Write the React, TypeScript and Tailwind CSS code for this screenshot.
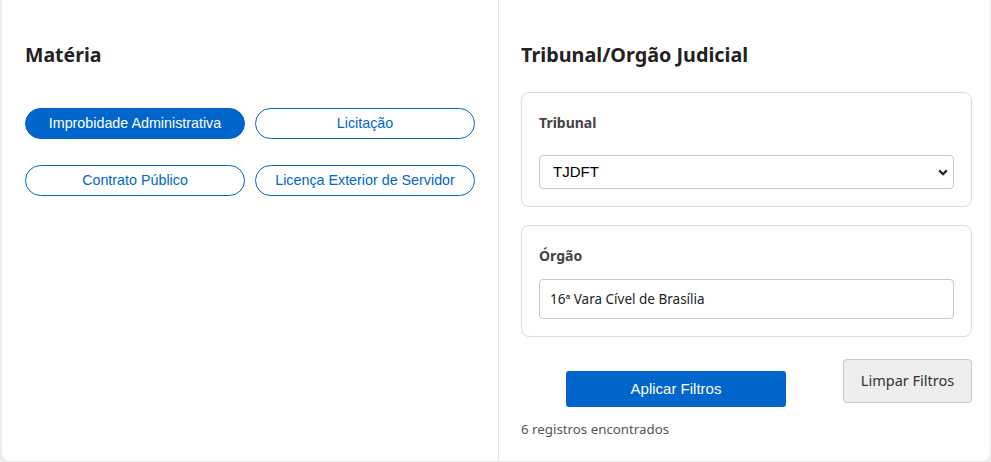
import React, { useState } from 'react';

const MATERIAS = [
  'Improbidade Administrativa',
  'Licitação',
  'Contrato Público',
  'Licença Exterior de Servidor',
];

const Chevron: React.FC = () => (
  <svg width="10" height="7" viewBox="0 0 10 7" className="pointer-events-none absolute right-[6px] top-[14px]">
    <path d="M1.2 1.4 5 5.2 8.8 1.4" fill="none" stroke="#222" strokeWidth="2.2" />
  </svg>
);

const App: React.FC = () => {
  const [materia, setMateria] = useState('Improbidade Administrativa');
  const [tribunal, setTribunal] = useState('TJDFT');
  const [orgao, setOrgao] = useState('16ª Vara Cível de Brasília');

  return (
    <div className="h-[462px] w-full overflow-hidden bg-[#ececec] pl-[2px] pr-px font-['Noto_Sans',sans-serif] text-[#333]">
      <div className="flex h-[461px] rounded-b-lg bg-white">
        {/* Matéria */}
        <section className="w-[497px] shrink-0 border-r border-[#e3e3e3] pl-[23px] pr-[22px] pt-[42px]">
          <h2 className="text-[19.5px] leading-[26px] font-bold text-[#222]">Matéria</h2>
          <div className="mt-[40px] grid w-[450px] grid-cols-2 gap-x-[10px] gap-y-[26px]">
            {MATERIAS.map((m) => (
              <button
                key={m}
                onClick={() => setMateria(m)}
                className={
                  m === materia
                    ? "h-[31px] rounded-full border border-[#0066cc] bg-[#0066cc] font-['Liberation_Sans',Arial,sans-serif] text-[14.3px] text-white"
                    : "h-[31px] rounded-full border border-[#0066cc] bg-white font-['Liberation_Sans',Arial,sans-serif] text-[14.3px] text-[#0066cc]"
                }
              >
                {m}
              </button>
            ))}
          </div>
        </section>

        {/* Tribunal / Órgão */}
        <section className="flex-1 pl-[22px] pr-[18px] pt-[42px]">
          <h2 className="text-[19.8px] leading-[26px] font-bold text-[#222]">Tribunal/Orgão Judicial</h2>

          <div className="mt-[24px] rounded-lg border border-[#dcdcdc] px-[17px] pt-[20px] pb-[17px]">
            <label className="block text-[14px] leading-[20px] font-bold text-[#444]">Tribunal</label>
            <div className="relative mt-[22px]">
              <select
                value={tribunal}
                onChange={(e) => setTribunal(e.target.value)}
                className="block h-[34px] w-full appearance-none rounded border border-[#c8c8c8] bg-white pl-[13px] font-['Liberation_Sans',Arial,sans-serif] text-[15px] text-black"
              >
                <option>TJDFT</option>
                <option>TJSP</option>
                <option>TJRJ</option>
              </select>
              <Chevron />
            </div>
          </div>

          <div className="mt-[18px] rounded-lg border border-[#dcdcdc] px-[17px] pt-[20px] pb-[17px]">
            <label className="block text-[14px] leading-[20px] font-bold text-[#444]">Órgão</label>
            <input
              value={orgao}
              onChange={(e) => setOrgao(e.target.value)}
              className="mt-[13px] block h-[40px] w-full rounded border border-[#c8c8c8] px-[10px] text-[13.5px] text-[#222] outline-none"
            />
          </div>

          <div className="mt-[22px] flex items-start">
            <button className="ml-[45px] mt-[12px] h-[36px] w-[220px] rounded-[3px] bg-[#0066cc] font-['Liberation_Sans',Arial,sans-serif] text-[15px] text-white">
              Aplicar Filtros
            </button>
            <button
              onClick={() => {
                setMateria('');
                setOrgao('');
              }}
              className="ml-auto h-[44px] w-[129px] rounded border border-[#c8c8c8] bg-[#eeeeee] text-[14.5px] text-[#333]"
            >
              Limpar Filtros
            </button>
          </div>

          <p className="mt-[13px] text-[13.3px] leading-[18px] text-[#555]">6 registros encontrados</p>
        </section>
      </div>
    </div>
  );
};

export default App;
